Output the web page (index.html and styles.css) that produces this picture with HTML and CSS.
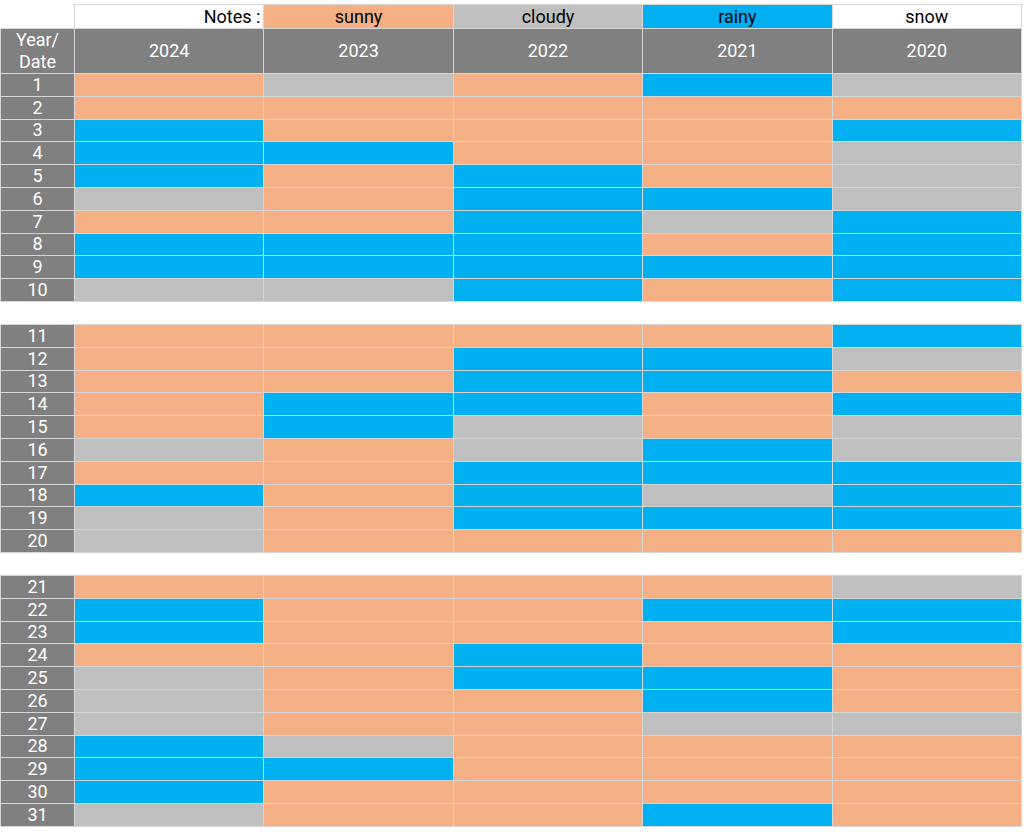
FILE: index.html
```html
<!DOCTYPE html>
<html>
<head>
<meta charset="utf-8">
<link rel="stylesheet" href="styles.css">
</head>
<body>
<table class="sheet">
<colgroup><col class="c-date"><col><col><col><col><col></colgroup>
<tr class="notes"><td class="blank"></td><td class="lbl">Notes :</td><td class="s">sunny</td><td class="c">cloudy</td><td class="r">rainy</td><td class="w">snow</td></tr>
<tr class="head"><td class="h">Year/<br>Date</td><td class="h">2024</td><td class="h">2023</td><td class="h">2022</td><td class="h">2021</td><td class="h">2020</td></tr>
<tr><td class="d">1</td><td class="s"></td><td class="c"></td><td class="s"></td><td class="r"></td><td class="c"></td></tr>
<tr><td class="d">2</td><td class="s"></td><td class="s"></td><td class="s"></td><td class="s"></td><td class="s"></td></tr>
<tr><td class="d">3</td><td class="r"></td><td class="s"></td><td class="s"></td><td class="s"></td><td class="r"></td></tr>
<tr><td class="d">4</td><td class="r"></td><td class="r"></td><td class="s"></td><td class="s"></td><td class="c"></td></tr>
<tr><td class="d">5</td><td class="r"></td><td class="s"></td><td class="r"></td><td class="s"></td><td class="c"></td></tr>
<tr><td class="d">6</td><td class="c"></td><td class="s"></td><td class="r"></td><td class="r"></td><td class="c"></td></tr>
<tr><td class="d">7</td><td class="s"></td><td class="s"></td><td class="r"></td><td class="c"></td><td class="r"></td></tr>
<tr><td class="d">8</td><td class="r"></td><td class="r"></td><td class="r"></td><td class="s"></td><td class="r"></td></tr>
<tr><td class="d">9</td><td class="r"></td><td class="r"></td><td class="r"></td><td class="r"></td><td class="r"></td></tr>
<tr><td class="d">10</td><td class="c"></td><td class="c"></td><td class="r"></td><td class="s"></td><td class="r"></td></tr>
<tr class="gap"><td colspan="6"></td></tr>
<tr><td class="d">11</td><td class="s"></td><td class="s"></td><td class="s"></td><td class="s"></td><td class="r"></td></tr>
<tr><td class="d">12</td><td class="s"></td><td class="s"></td><td class="r"></td><td class="r"></td><td class="c"></td></tr>
<tr><td class="d">13</td><td class="s"></td><td class="s"></td><td class="r"></td><td class="r"></td><td class="s"></td></tr>
<tr><td class="d">14</td><td class="s"></td><td class="r"></td><td class="r"></td><td class="s"></td><td class="r"></td></tr>
<tr><td class="d">15</td><td class="s"></td><td class="r"></td><td class="c"></td><td class="s"></td><td class="c"></td></tr>
<tr><td class="d">16</td><td class="c"></td><td class="s"></td><td class="c"></td><td class="r"></td><td class="c"></td></tr>
<tr><td class="d">17</td><td class="s"></td><td class="s"></td><td class="r"></td><td class="r"></td><td class="r"></td></tr>
<tr><td class="d">18</td><td class="r"></td><td class="s"></td><td class="r"></td><td class="c"></td><td class="r"></td></tr>
<tr><td class="d">19</td><td class="c"></td><td class="s"></td><td class="r"></td><td class="r"></td><td class="r"></td></tr>
<tr><td class="d">20</td><td class="c"></td><td class="s"></td><td class="s"></td><td class="s"></td><td class="s"></td></tr>
<tr class="gap"><td colspan="6"></td></tr>
<tr><td class="d">21</td><td class="s"></td><td class="s"></td><td class="s"></td><td class="s"></td><td class="c"></td></tr>
<tr><td class="d">22</td><td class="r"></td><td class="s"></td><td class="s"></td><td class="r"></td><td class="r"></td></tr>
<tr><td class="d">23</td><td class="r"></td><td class="s"></td><td class="s"></td><td class="s"></td><td class="r"></td></tr>
<tr><td class="d">24</td><td class="s"></td><td class="s"></td><td class="r"></td><td class="s"></td><td class="s"></td></tr>
<tr><td class="d">25</td><td class="c"></td><td class="s"></td><td class="r"></td><td class="r"></td><td class="s"></td></tr>
<tr><td class="d">26</td><td class="c"></td><td class="s"></td><td class="s"></td><td class="r"></td><td class="s"></td></tr>
<tr><td class="d">27</td><td class="c"></td><td class="s"></td><td class="s"></td><td class="c"></td><td class="c"></td></tr>
<tr><td class="d">28</td><td class="r"></td><td class="c"></td><td class="s"></td><td class="s"></td><td class="s"></td></tr>
<tr><td class="d">29</td><td class="r"></td><td class="r"></td><td class="s"></td><td class="s"></td><td class="s"></td></tr>
<tr><td class="d">30</td><td class="r"></td><td class="s"></td><td class="s"></td><td class="s"></td><td class="s"></td></tr>
<tr><td class="d">31</td><td class="c"></td><td class="s"></td><td class="s"></td><td class="r"></td><td class="s"></td></tr>
</table>
</body>
</html>
```

FILE: styles.css
```css
html, body {
  margin: 0;
  padding: 0;
  background: #ffffff;
}
body {
  padding-top: 4px;
  font-family: Roboto, "Liberation Sans", sans-serif;
  font-size: 18px;
}
.sheet {
  border-collapse: collapse;
  table-layout: fixed;
  width: 1022px;
}
.c-date {
  width: 74px;
}
.sheet td {
  border: 1px solid #d6d6d6;
  padding: 0;
  height: 21.8px;
  line-height: 20px;
  text-align: center;
  color: #000000;
  overflow: hidden;
}
.sheet tr.notes td {
  height: 23px;
}
.sheet td.blank {
  border: none;
  background: transparent;
}
.sheet td.lbl {
  background: #ffffff;
  text-align: right;
  padding-right: 3px;
}
.sheet tr.head td {
  height: 44px;
  line-height: 22px;
}
.sheet td.h,
.sheet td.d {
  background: #808080;
  color: #ffffff;
}
.sheet td.s { background: #f4b084; }
.sheet td.c { background: #bfbfbf; }
.sheet td.r { background: #00b0f0; }
.sheet td.w { background: #ffffff; }
.sheet tr.gap td {
  border: none;
  height: 22px;
  background: #ffffff;
}
```
